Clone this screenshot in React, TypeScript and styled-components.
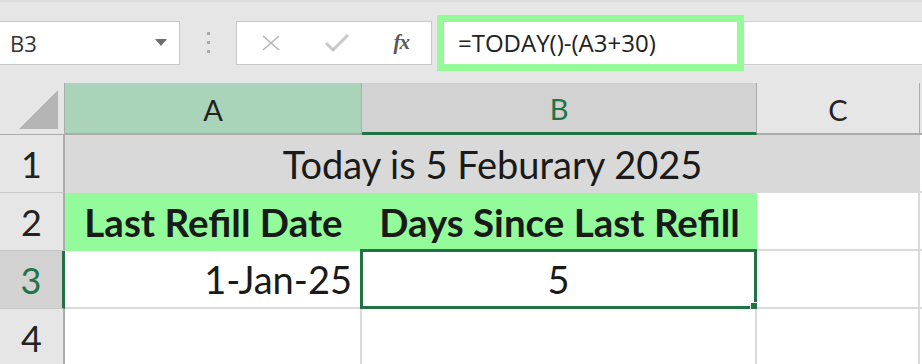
import styled, { createGlobalStyle } from 'styled-components';

const GlobalStyle = createGlobalStyle`
  html, body {
    margin: 0;
    padding: 0;
    background: #ffffff;
    overflow: hidden;
  }
`;

const Page = styled.div`
  width: 922px;
  height: 364px;
  overflow: hidden;
  background: #ffffff;
`;

const FormulaBar = styled.div`
  height: 83px;
  background: #e6e6e6;
  border-top: 2px solid #dcdcdc;
  box-sizing: border-box;
  display: flex;
  align-items: center;
`;

const NameBox = styled.div`
  width: 180px;
  height: 44px;
  box-sizing: border-box;
  background: #ffffff;
  border: 1px solid #c8c8c8;
  border-left: none;
  display: flex;
  align-items: center;
  justify-content: space-between;
  padding: 0 12px 0 10px;
  font-family: "Open Sans", "Noto Sans", sans-serif;
  font-size: 22px;
  color: #333;
`;

const Grip = styled.div`
  width: 56px;
  display: flex;
  flex-direction: column;
  align-items: center;
  gap: 6px;

  span {
    width: 3px;
    height: 3px;
    background: #a8a8a8;
  }
`;

const FxBox = styled.div`
  width: 196px;
  height: 44px;
  box-sizing: border-box;
  background: #ffffff;
  border: 1px solid #c8c8c8;
  display: flex;
  align-items: center;
  padding: 0 22px 0 25px;
  justify-content: space-between;
`;

const FxLabel = styled.span`
  font-family: "Liberation Serif", serif;
  font-style: italic;
  font-weight: bold;
  font-size: 21px;
  color: #5a5a5a;
  letter-spacing: -1px;
`;

const FormulaInput = styled.div`
  margin-left: 5px;
  width: 307px;
  height: 56px;
  box-sizing: border-box;
  border: 7px solid #94fb98;
  background: #ffffff;
  display: flex;
  align-items: center;
  padding-left: 14px;
  font-family: "Open Sans", "Noto Sans", sans-serif;
  font-size: 24px;
  color: #222;
`;

const FormulaRest = styled.div`
  flex: 1;
  height: 44px;
  box-sizing: border-box;
  background: #ffffff;
  border-top: 1px solid #cfcfcf;
  border-bottom: 1px solid #cfcfcf;
`;

const Sheet = styled.div`
  display: grid;
  grid-template-columns: 65px 297px 395px 163px 1fr;
  grid-template-rows: 52px 58px 58px 58px 58px;
  font-family: Lato, "Open Sans", sans-serif;
  color: #1a1a1a;
`;

const Corner = styled.div`
  background: #e6e6e6;
  border-right: 1px solid #ababab;
  border-bottom: 1px solid #ababab;
  display: flex;
  align-items: flex-end;
  justify-content: flex-end;
  padding: 0 6px 5px 0;
`;

const ColHead = styled.div<{ $state?: 'active' | 'selected' }>`
  background: ${p => (p.$state === 'active' ? '#a9d4b9' : p.$state === 'selected' ? '#d2d2d2' : '#e6e6e6')};
  color: ${p => (p.$state === 'selected' ? '#217346' : '#222')};
  border-right: 1px solid #ababab;
  border-bottom: ${p => (p.$state === 'selected' ? '3px solid #217346' : '2px solid #ababab')};
  display: flex;
  align-items: center;
  justify-content: center;
  font-size: 29px;
  padding-top: 2px;
  box-sizing: border-box;
`;

const RowHead = styled.div<{ $selected?: boolean }>`
  background: ${p => (p.$selected ? '#d2d2d2' : '#e6e6e6')};
  color: ${p => (p.$selected ? '#217346' : '#222')};
  border-right: ${p => (p.$selected ? '3px solid #217346' : '2px solid #ababab')};
  border-bottom: 1px solid #c6c6c6;
  display: flex;
  align-items: center;
  justify-content: center;
  font-size: 36px;
  box-sizing: border-box;
`;

const Cell = styled.div<{ $fill?: string; $align?: 'left' | 'center' | 'right'; $bold?: boolean; $span?: number }>`
  background: ${p => p.$fill ?? '#ffffff'};
  border-right: ${p => (p.$fill ? 'none' : '2px solid #dadada')};
  border-bottom: ${p => (p.$fill ? 'none' : '2px solid #dadada')};
  grid-column: ${p => (p.$span ? `span ${p.$span}` : 'auto')};
  display: flex;
  align-items: center;
  justify-content: ${p => (p.$align === 'right' ? 'flex-end' : p.$align === 'center' ? 'center' : 'flex-start')};
  padding: 0 8px;
  font-size: ${p => (p.$bold ? '38.5px' : '38px')};
  font-weight: ${p => (p.$bold ? 700 : 400)};
  white-space: nowrap;
  box-sizing: border-box;
  position: relative;
`;

const Selection = styled.div`
  position: absolute;
  left: -2px;
  top: -2px;
  right: -2px;
  bottom: -2px;
  border: 3px solid #217346;
  pointer-events: none;

  &::after {
    content: '';
    position: absolute;
    right: -5px;
    bottom: -5px;
    width: 7px;
    height: 7px;
    background: #217346;
    border: 1px solid #ffffff;
  }
`;

const App = () => (
  <Page>
    <GlobalStyle />
    <FormulaBar>
      <NameBox>
        B3
        <svg width="12" height="7" viewBox="0 0 12 7">
          <path d="M0 0h12L6 7z" fill="#6e6e6e" />
        </svg>
      </NameBox>
      <Grip>
        <span />
        <span />
        <span />
      </Grip>
      <FxBox>
        <svg width="18" height="16" viewBox="0 0 18 16">
          <path d="M1 1l16 14M17 1L1 15" stroke="#b5b5b5" strokeWidth="1.6" fill="none" />
        </svg>
        <svg width="24" height="18" viewBox="0 0 24 18">
          <path d="M1 9l7 7L23 1" stroke="#c8c8c8" strokeWidth="3" fill="none" />
        </svg>
        <FxLabel>fx</FxLabel>
      </FxBox>
      <FormulaInput>=TODAY()-(A3+30)</FormulaInput>
      <FormulaRest />
    </FormulaBar>
    <Sheet>
      <Corner>
        <svg width="39" height="39" viewBox="0 0 39 39">
          <path d="M0 39H39V0z" fill="#b4b4b4" />
        </svg>
      </Corner>
      <ColHead $state="active">A</ColHead>
      <ColHead $state="selected">B</ColHead>
      <ColHead>C</ColHead>
      <ColHead />

      <RowHead>1</RowHead>
      <Cell $fill="#d9d9d9" $align="center" $span={3}>Today is 5 Feburary 2025</Cell>
      <Cell />

      <RowHead>2</RowHead>
      <Cell $fill="#94fb9a" $align="center" $bold>Last Refill Date</Cell>
      <Cell $fill="#94fb9a" $align="center" $bold>Days Since Last Refill</Cell>
      <Cell />
      <Cell />

      <RowHead $selected>3</RowHead>
      <Cell $align="right">1-Jan-25</Cell>
      <Cell $align="center">
        5
        <Selection />
      </Cell>
      <Cell />
      <Cell />

      <RowHead>4</RowHead>
      <Cell />
      <Cell />
      <Cell />
      <Cell />
    </Sheet>
  </Page>
);

export default App;
